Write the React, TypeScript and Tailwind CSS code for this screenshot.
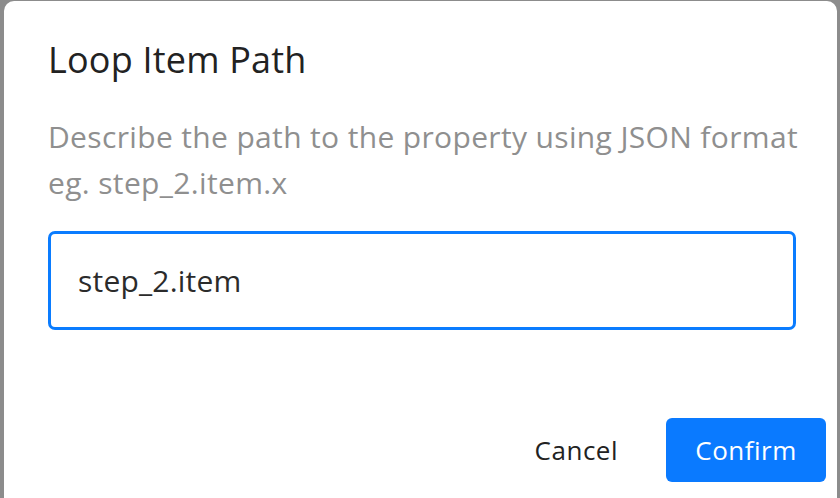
import React, { useState } from "react";

const App = () => {
  const [path, setPath] = useState("step_2.item");

  return (
    <div className="w-[840px] h-[498px] overflow-hidden bg-[#8c8c8c] pl-[4px] pr-[3px] pt-px" style={{ fontFamily: "'Open Sans', 'Liberation Sans', sans-serif" }}>
      <div className="h-[510px] bg-white rounded-[10px] flex flex-col">
        {/* header */}
        <div className="pl-[44px] pr-[41px] pt-[39px]">
          <h2 className="text-[36px] leading-[40px] text-[#222] tracking-[0.2px]">Loop Item Path</h2>
        </div>

        {/* body */}
        <div className="pl-[44px] pr-[41px] pt-[34px]">
          <p className="text-[30px] leading-[46px] text-[#8f8f8f] tracking-[0.35px] whitespace-nowrap">
            Describe the path to the property using JSON format
            <br />
            eg. step_2.item.x
          </p>
          <input
            type="text"
            value={path}
            onChange={(e) => setPath(e.target.value)}
            className="mt-[25px] w-full h-[99px] rounded-[7px] border-[3px] border-[#0a7cff] px-[27px] text-[30px] text-[#2b2b2b] tracking-[0.2px] outline-none"
          />
        </div>

        {/* footer */}
        <div className="flex justify-end items-center gap-[10px] pr-[11px] pt-[88px]">
          <button className="h-[64px] px-[38px] text-[26px] text-[#222] tracking-[0.5px]">Cancel</button>
          <button className="h-[64px] w-[160px] rounded-[6px] bg-[#0a7aff] text-white text-[26px] tracking-[0.5px]">
            Confirm
          </button>
        </div>
      </div>
    </div>
  );
};

export default App;
